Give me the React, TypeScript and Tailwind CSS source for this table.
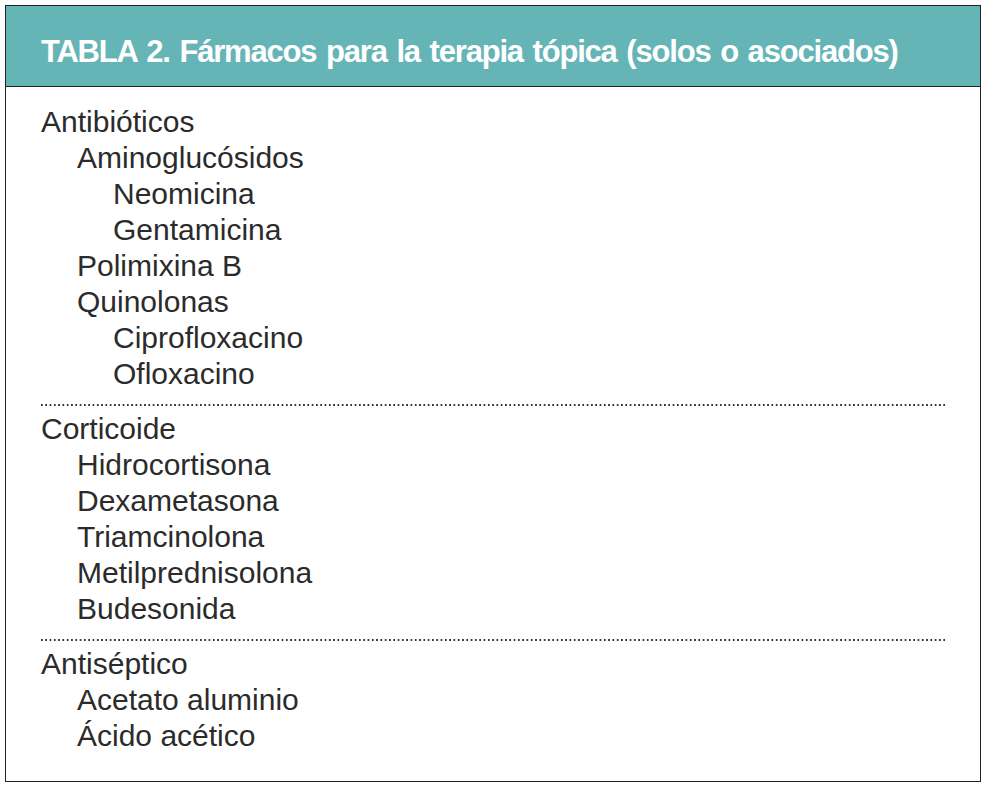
const groups = [
  [
    ["Antibióticos", 0],
    ["Aminoglucósidos", 1],
    ["Neomicina", 2],
    ["Gentamicina", 2],
    ["Polimixina B", 1],
    ["Quinolonas", 1],
    ["Ciprofloxacino", 2],
    ["Ofloxacino", 2],
  ],
  [
    ["Corticoide", 0],
    ["Hidrocortisona", 1],
    ["Dexametasona", 1],
    ["Triamcinolona", 1],
    ["Metilprednisolona", 1],
    ["Budesonida", 1],
  ],
  [
    ["Antiséptico", 0],
    ["Acetato aluminio", 1],
    ["Ácido acético", 1],
  ],
] as const

const indent = ["pl-0", "pl-9", "pl-[72px]"]

const Dots = () => (
  <div className="mr-[34px] h-[2px] bg-[linear-gradient(to_right,#333_1.4px,transparent_1.4px)] bg-[length:4.3px_2px] bg-repeat-x" />
)

export default function App() {
  return (
    <div className="min-h-[792px] bg-white pl-[5px] pt-[5px] font-['Liberation_Sans',Arial,sans-serif]">
      <div className="w-[976px] h-[777px] border-[1.5px] border-[#222]">
        <div className="h-[81px] bg-[#66b5b6] border-b-[1.5px] border-[#222] pl-[35px] pt-[28px]">
          <h1 className="text-[31px] leading-[36px] font-bold text-white tracking-[-1.2px] [word-spacing:2.3px]">
            TABLA 2. Fármacos para la terapia tópica (solos o asociados)
          </h1>
        </div>
        <div className="pl-[35px] pt-[17px]">
          {groups.map((g, gi) => (
            <div key={gi}>
              {gi > 0 && (
                <div className="pt-[12px] pb-[5px]">
                  <Dots />
                </div>
              )}
              {g.map(([t, lvl]) => (
                <div key={t} className={`${indent[lvl]} text-[30px] leading-[36px] text-[#2b2b2b]`}>
                  {t}
                </div>
              ))}
            </div>
          ))}
        </div>
      </div>
    </div>
  )
}
